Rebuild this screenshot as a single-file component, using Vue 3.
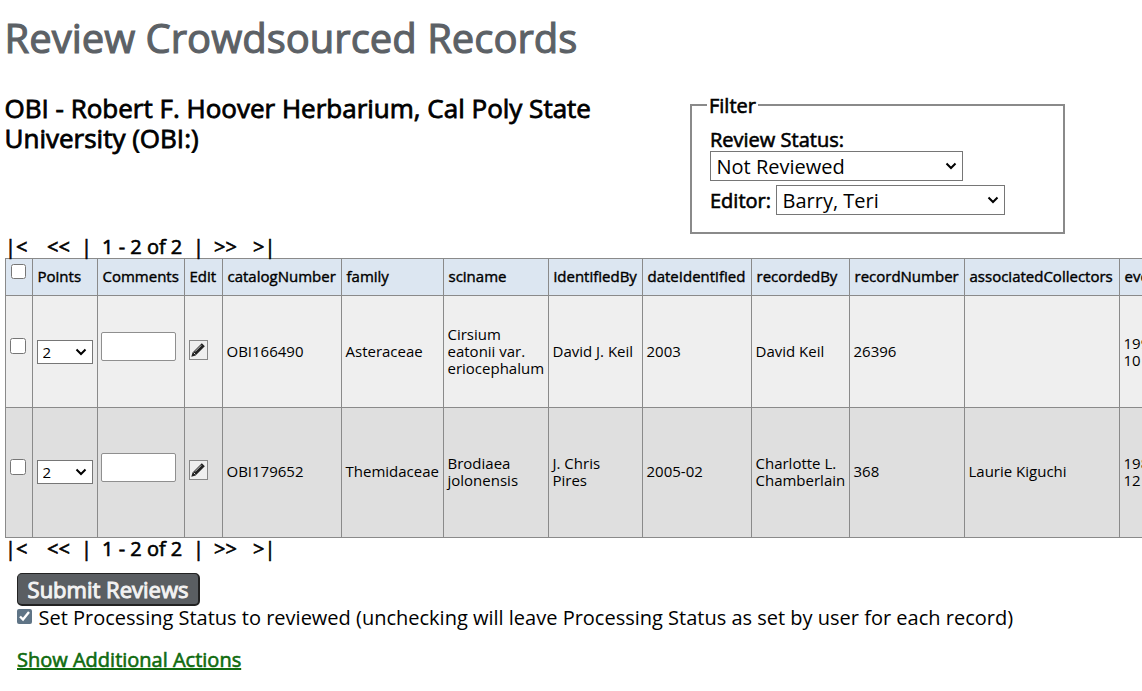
<script setup>
const headers = ['Points','Comments','Edit','catalogNumber','family','sciname','identifiedBy','dateIdentified','recordedBy','recordNumber','associatedCollectors','eventDate']
const rows = [
  { id:'OBI166490', family:'Asteraceae', sciname:'Cirsium eatonii var. eriocephalum', by:'David J. Keil', date:'2003', rec:'David Keil', num:'26396', assoc:'', ev:'1999-10-10', cls:'odd' },
  { id:'OBI179652', family:'Themidaceae', sciname:'Brodiaea jolonensis', by:'J. Chris Pires', date:'2005-02', rec:'Charlotte L. Chamberlain', num:'368', assoc:'Laurie Kiguchi', ev:'1982-12-12', cls:'even' }
]
</script>

<template>
  <div class="page">
    <h1 class="title">Review Crowdsourced Records</h1>
    <div class="top">
      <h2 class="coll">OBI - Robert F. Hoover Herbarium, Cal Poly State University (OBI:)</h2>
      <fieldset class="filter">
        <legend>Filter</legend>
        <div class="lab">Review Status:</div>
        <select class="sel s1"><option>Not Reviewed</option></select>
        <div class="ed"><span class="lab">Editor:</span> <select class="sel s2"><option>Barry, Teri</option></select></div>
      </fieldset>
    </div>
    <div class="pager first">
      <span>|&lt;</span><span>&lt;&lt;</span><span>|</span><span>1 - 2 of 2</span><span>|</span><span>&gt;&gt;</span><span>&gt;|</span>
    </div>
    <table class="grid">
      <colgroup>
        <col class="c0"><col class="c1"><col class="c2"><col class="c3"><col class="c4"><col class="c5"><col class="c6"><col class="c7"><col class="c8"><col class="c9"><col class="c10"><col class="c11"><col class="c12">
      </colgroup>
      <thead>
        <tr>
          <th class="chk"><input type="checkbox"></th>
          <th v-for="h in headers" :key="h">{{ h }}</th>
        </tr>
      </thead>
      <tbody>
        <tr v-for="r in rows" :key="r.id" :class="r.cls">
          <td class="chkc"><input type="checkbox"></td>
          <td><select class="pts"><option>2</option></select></td>
          <td class="cm"><input class="txt" type="text"></td>
          <td class="editc">
            <span class="pen">
              <svg viewBox="0 0 16 16" width="16" height="16"><path d="M11.8 1.2l3 3-9.2 9.2-4.3 1.3 1.3-4.3z" fill="#222"/><path d="M3.6 10.6l1.8 1.8M5 9.6l6.2-6.2" stroke="#efefef" stroke-width=".9" fill="none"/></svg>
            </span>
          </td>
          <td>{{ r.id }}</td>
          <td>{{ r.family }}</td>
          <td>{{ r.sciname }}</td>
          <td>{{ r.by }}</td>
          <td>{{ r.date }}</td>
          <td>{{ r.rec }}</td>
          <td>{{ r.num }}</td>
          <td>{{ r.assoc }}</td>
          <td>{{ r.ev }}</td>
        </tr>
      </tbody>
    </table>
    <div class="pager second">
      <span>|&lt;</span><span>&lt;&lt;</span><span>|</span><span>1 - 2 of 2</span><span>|</span><span>&gt;&gt;</span><span>&gt;|</span>
    </div>
    <div class="actions">
      <button class="submit">Submit Reviews</button>
      <label class="setp"><input type="checkbox" checked> Set Processing Status to reviewed (unchecking will leave Processing Status as set by user for each record)</label>
      <a class="more" href="#">Show Additional Actions</a>
    </div>
  </div>
</template>

<style>
html, body { margin: 0; overflow: hidden; background: #fff; }
</style>

<style scoped>
.page { width: 1142px; height: 691px; overflow: hidden; font-family: "Open Sans", sans-serif; color: #000; padding: 0 0 0 5px; box-sizing: border-box; }
.title { margin: 0 0 0 -0.5px; padding-top: 12px; line-height: 52px; height: 52px; font-size: 40px; font-weight: 400; -webkit-text-stroke: 1.1px currentColor; color: #5c6166; }
.top { display: flex; height: 151px; margin-top: 25px; position: relative; }
.coll { margin: 4px 0 0 -0.5px; width: 600px; font-size: 26px; line-height: 30px; font-weight: 400; -webkit-text-stroke: 0.8px currentColor; }
.filter { position: absolute; left: 685px; top: 4px; width: 375px; height: 141px; margin: 0; padding: 0 0 0 18px; box-sizing: border-box; border: 2px solid #8a8a8a; }
.filter legend { font-size: 20px; font-weight: 400; -webkit-text-stroke: 0.6px currentColor; padding: 2px 2px 0; margin-left: -3px; line-height: 22px; }
.lab { font-size: 20px; font-weight: 400; -webkit-text-stroke: 0.6px currentColor; line-height: 23px; }
.filter > .lab { margin-top: 11px; }
.sel { appearance: none; font-family: "Open Sans", sans-serif; font-size: 20px; color: #000; border: 1px solid #767676; border-radius: 0; height: 30px; padding: 0 0 0 5.5px; box-sizing: border-box; display: block; background: #fff url("data:image/svg+xml,%3Csvg xmlns='http://www.w3.org/2000/svg' width='12' height='8'%3E%3Cpath d='M1.5 1.5L6 6l4.5-4.5' fill='none' stroke='%23000' stroke-width='2'/%3E%3C/svg%3E") no-repeat right 5px center; }
.s1 { width: 253px; }
.s2 { width: 229px; }
.ed { display: flex; align-items: center; gap: 5px; margin-top: 4px; }
.pager { display: flex; font-size: 20px; font-weight: 400; -webkit-text-stroke: 0.6px currentColor; line-height: 24px; height: 24px; margin-left: 0; white-space: nowrap; }
.pager span:nth-child(1) { width: 42px; }
.pager span:nth-child(2) { width: 34px; }
.pager span:nth-child(3) { width: 21px; }
.pager span:nth-child(4) { width: 91px; }
.pager span:nth-child(5) { width: 21px; }
.pager span:nth-child(6) { width: 39px; }
.first { margin-top: -5px; }
.second { margin-top: -1px; }
.grid { border-collapse: collapse; table-layout: fixed; width: 1194px; font-size: 15px; line-height: 17px; margin-top: -1px; }
.grid th, .grid td { border: 1px solid #8a8a8a; padding: 0 4px; text-align: left; vertical-align: middle; overflow: hidden; }
.grid td { padding-right: 5px; padding-left: 3.5px; }
.grid th { background: #dce6f1; font-weight: 400; -webkit-text-stroke: 0.4px currentColor; height: 34px; padding-bottom: 2px; white-space: nowrap; padding-left: 4.5px; }
.odd td { background: #efefef; height: 111px; }
.even td { background: #dfdfdf; height: 127px; padding-bottom: 2px; }
.c0 { width: 27px; } .c1 { width: 65px; } .c2 { width: 87px; } .c3 { width: 38px; } .c4 { width: 119px; } .c5 { width: 102px; } .c6 { width: 105px; } .c7 { width: 94px; } .c8 { width: 109px; } .c9 { width: 98px; } .c10 { width: 115px; } .c11 { width: 155px; } .c12 { width: 80px; }
.grid th.chk { vertical-align: top; padding: 0 0 0 5px; -webkit-text-stroke: 0; }
.chk input, .chkc input { width: 15px; height: 15px; margin: 0; display: block; }
.chkc input { width: 16px; height: 16px; }
.chk input { margin-top: 5px; }
.grid td.chkc { padding: 0 0 0 4px; }
.chkc input { margin-top: -11px; }
.grid .pts { appearance: none; width: 56px; height: 24px; font-family: "Open Sans", sans-serif; font-size: 15px; color: #000; border: 1px solid #767676; border-radius: 0; display: block; padding: 0 0 0 5px; background: #fff url("data:image/svg+xml,%3Csvg xmlns='http://www.w3.org/2000/svg' width='12' height='8'%3E%3Cpath d='M1.5 1.5L6 6l4.5-4.5' fill='none' stroke='%23000' stroke-width='2'/%3E%3C/svg%3E") no-repeat right 5px center; }
.grid td.cm { padding: 0 3px; }
.txt { width: 75px; height: 29px; box-sizing: border-box; display: block; border: 1px solid #8f8f8f; border-radius: 2px; background: #fff; margin-top: -10px; padding: 0; }
.even .txt { margin-top: -11px; }
.pen { width: 19px; height: 20px; border: 1px solid #888; background: #efefef; box-sizing: border-box; display: flex; align-items: center; justify-content: center; margin-top: -3px; }
.pen svg { width: 16px; height: 16px; }
.actions { padding-left: 12px; }
.submit { display: block; margin-top: 12px; width: 183px; height: 33px; box-sizing: border-box; background: #5a5e62; color: #f2f2f2; border: 1px solid #222; border-bottom-width: 2px; border-right-width: 2px; border-radius: 5px; font-family: "Open Sans", sans-serif; font-size: 22px; font-weight: 400; -webkit-text-stroke: 1px currentColor; padding: 0; line-height: 28px; }
.setp { display: flex; align-items: center; gap: 6.5px; font-size: 20px; line-height: 24px; margin-top: -1px; height: 26px; white-space: nowrap; }
.setp input { width: 15px; height: 15px; margin: 0 0 3px; accent-color: #5f7486; }
.more { display: block; margin-top: 16px; font-size: 20px; font-weight: 400; -webkit-text-stroke: 0.6px currentColor; line-height: 26px; color: #0f6b0f; text-decoration: underline; }
</style>
